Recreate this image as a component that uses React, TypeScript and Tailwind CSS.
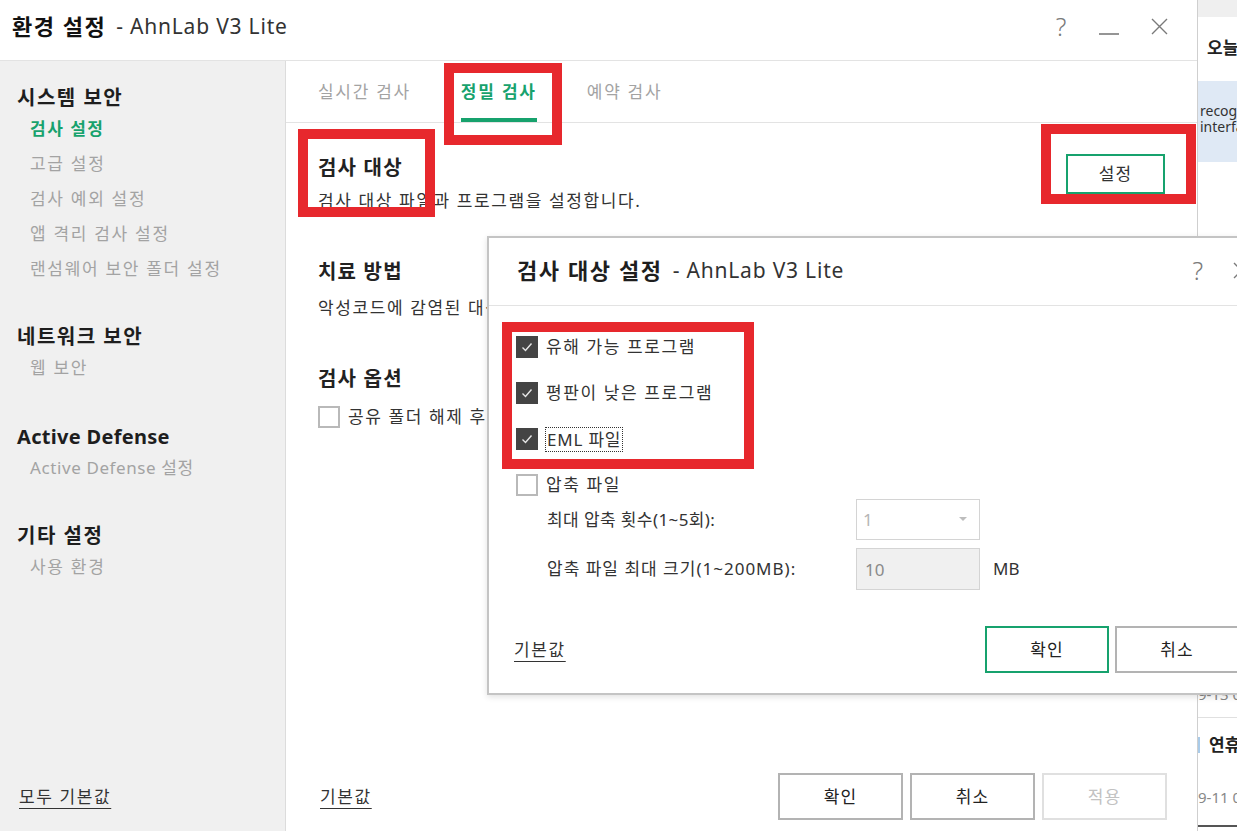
import React from 'react';

function CheckBox({ checked }: { checked?: boolean }) {
  if (checked) {
    return (
      <span className="flex h-[22px] w-[22px] shrink-0 items-center justify-center bg-[#444444]">
        <svg width="16" height="16" viewBox="0 0 16 16">
          <polyline points="3.5,8.5 6.5,11.5 12.5,4.5" fill="none" stroke="#e6e6e6" strokeWidth="1.4" />
        </svg>
      </span>
    );
  }
  return <span className="h-[22px] w-[22px] shrink-0 border-2 border-[#b9b9b9] bg-white" />;
}

function CloseIcon() {
  return (
    <svg width="17" height="17" viewBox="0 0 17 17">
      <path d="M1 1 L16 16 M16 1 L1 16" stroke="#7a7a7a" strokeWidth="1.4" />
    </svg>
  );
}

const subItem = 'pl-[13px] text-[17px] leading-[35px] tracking-[1.7px] text-[#a3a3a3]';
const groupHead = 'text-[20px] font-bold leading-[26px] tracking-[1.5px] text-[#1e1e1e]';
const bodyText = 'text-[17px] leading-[24px] tracking-[1.6px] text-[#333]';

function Sidebar() {
  return (
    <aside className="flex w-[286px] shrink-0 flex-col border-r border-[#dcdcdc] bg-[#f0f0f0] pl-[17px] pt-[24px]">
      <h3 className={groupHead}>시스템 보안</h3>
      <div className="pl-[13px] text-[17px] font-bold leading-[35px] tracking-[1.5px] text-[#17a26d]">검사 설정</div>
      <div className={subItem}>고급 설정</div>
      <div className={subItem}>검사 예외 설정</div>
      <div className={subItem}>앱 격리 검사 설정</div>
      <div className={subItem}>랜섬웨어 보안 폴더 설정</div>

      <h3 className={`mt-[38px] ${groupHead}`}>네트워크 보안</h3>
      <div className={subItem}>웹 보안</div>

      <h3 className="mt-[39px] text-[20px] font-bold leading-[26px] tracking-[0.3px] text-[#1e1e1e]">Active Defense</h3>
      <div className="pl-[13px] text-[17px] leading-[35px] tracking-[0.6px] text-[#a3a3a3]">Active Defense 설정</div>

      <h3 className={`mt-[38px] ${groupHead}`}>기타 설정</h3>
      <div className={subItem}>사용 환경</div>

      <div className="mt-auto pb-[22px] pl-[2px]">
        <span className={`${bodyText} underline underline-offset-[5px]`}>모두 기본값</span>
      </div>
    </aside>
  );
}

function Content() {
  const tabs = [
    { label: '실시간 검사', active: false },
    { label: '정밀 검사', active: true },
    { label: '예약 검사', active: false },
  ];
  return (
    <main className="flex min-w-0 flex-1 flex-col bg-white">
      <div className="flex h-[62px] gap-[50px] border-b border-[#e3e3e3] pl-[32px]">
        {tabs.map((t) =>
          t.active ? (
            <div key={t.label} className="flex h-full flex-col">
              <span className="pt-[19px] text-[17px] font-bold leading-[24px] tracking-[1.8px] text-[#17a26d]">{t.label}</span>
              <span className="flex-1" />
              <span className="h-[4px] bg-[#17a26d]" />
            </div>
          ) : (
            <div key={t.label} className="flex h-full flex-col">
              <span className="pt-[19px] text-[17px] leading-[24px] tracking-[1.7px] text-[#a3a3a3]">{t.label}</span>
            </div>
          )
        )}
      </div>

      <div className="pl-[32px] pr-[32px] pt-[32px]">
        <section className="flex items-start justify-between">
          <div>
            <h2 className="text-[20px] font-bold leading-[26px] tracking-[1.2px] text-[#222]">검사 대상</h2>
            <p className={`mt-[8px] ${bodyText}`}>검사 대상 파일과 프로그램을 설정합니다.</p>
          </div>
          <button className="-mt-px h-[40px] w-[99px] border-2 border-[#17a26d] text-[17px] tracking-[1px] text-[#333]">설정</button>
        </section>

        <section className="mt-[46px]">
          <h2 className="text-[20px] font-bold leading-[26px] tracking-[1.2px] text-[#222]">치료 방법</h2>
          <p className={`mt-[11px] whitespace-nowrap ${bodyText}`}>
            악성코드에 감염된 대상 파일을 치료하는 방법을 설정합니다.
          </p>
        </section>

        <section className="mt-[46px]">
          <h2 className="text-[20px] font-bold leading-[26px] tracking-[1.2px] text-[#222]">검사 옵션</h2>
          <div className="mt-[13px] flex h-[24px] items-center gap-[8px]">
            <CheckBox />
            <span className={`whitespace-nowrap ${bodyText}`}>공유 폴더 해제 후 검사</span>
          </div>
        </section>
      </div>

      <div className="mt-auto flex items-center pb-[11px] pl-[34px] pr-[30px]">
        <span className={`${bodyText} underline underline-offset-[5px]`}>기본값</span>
        <div className="ml-auto flex gap-[7px]">
          <button className="h-[47px] w-[125px] border-2 border-[#b3b3b3] text-[17px] tracking-[1px] text-[#222]">확인</button>
          <button className="h-[47px] w-[125px] border-2 border-[#b3b3b3] text-[17px] tracking-[1px] text-[#222]">취소</button>
          <button className="h-[47px] w-[125px] border-2 border-[#e0e0e0] text-[17px] tracking-[1px] text-[#c2c2c2]">적용</button>
        </div>
      </div>
    </main>
  );
}

function SideStrip() {
  return (
    <div className="flex min-w-0 flex-1 flex-col overflow-hidden whitespace-nowrap bg-white">
      <div className="h-[17px] bg-[#efefef]" />
      <div className="mt-[19px] pl-[9px] text-[17px] font-bold leading-[24px] text-[#222]">오늘</div>
      <div className="mt-[21px] h-[81px] bg-[#dfe9f5] pl-[2px] pt-[22px] text-[14px] leading-[16px] text-[#333]">
        <div>recognition</div>
        <div>interface</div>
      </div>
      <div className="flex-1" />
      <div className="h-[36px] border-b border-[#e0e0e0] text-[15px] leading-[24px] text-[#888]">9-13 08:00</div>
      <div className="flex h-[54px] items-center">
        <span className="border-l-2 border-[#a9cbe9] pl-[9px] text-[17px] font-bold leading-[16px] text-[#222]">연휴</span>
      </div>
      <div className="h-[55px] border-b-2 border-[#555] pt-[13px] text-[15px] leading-[24px] text-[#888]">9-11 08:00</div>
      <div className="h-[4px]" />
    </div>
  );
}

function Dialog() {
  return (
    <div className="absolute left-[487px] top-[236px] flex h-[459px] w-[790px] flex-col border-2 border-[#c4c4c4] bg-white shadow-[0_2px_6px_rgba(0,0,0,0.12)]">
      <div className="flex h-[68px] shrink-0 items-start border-b border-[#e3e3e3] pl-[28px] pt-[17px]">
        <span className="text-[22px] font-bold leading-[30px] tracking-[1.6px] text-[#1e1e1e]">검사 대상 설정</span>
        <span className="ml-[10px] text-[21px] leading-[30px] tracking-[0.8px] text-[#333]">- AhnLab V3 Lite</span>
        <div className="ml-auto flex items-center gap-[30px] pr-[25px] pt-[2px]">
          <span className="text-[25px] font-light leading-[26px] text-[#7a7a7a]">?</span>
          <CloseIcon />
        </div>
      </div>

      <div className="flex flex-col pl-[27px] pt-[30px]">
        <div className="flex flex-col gap-[24px]">
          <label className="flex h-[22px] items-center gap-[8px]">
            <CheckBox checked />
            <span className={bodyText}>유해 가능 프로그램</span>
          </label>
          <label className="flex h-[22px] items-center gap-[8px]">
            <CheckBox checked />
            <span className={bodyText}>평판이 낮은 프로그램</span>
          </label>
          <label className="flex h-[22px] items-center gap-[7px]">
            <CheckBox checked />
            <span className="border border-dotted border-[#333] px-[1px] text-[17px] leading-[23px] tracking-[0.8px] text-[#333]">EML 파일</span>
          </label>
          <label className="flex h-[22px] items-center gap-[8px]">
            <CheckBox />
            <span className={bodyText}>압축 파일</span>
          </label>
        </div>

        <div className="mt-[3px] flex items-center pl-[31px]">
          <span className="w-[309px] text-[17px] leading-[24px] tracking-[0.4px] text-[#333]">최대 압축 횟수(1~5회):</span>
          <div className="flex h-[41px] w-[124px] items-center border border-[#d4d4d4] pl-[6px] pr-[12px]">
            <span className="text-[17px] text-[#b5b5b5]">1</span>
            <svg className="ml-auto" width="8" height="5" viewBox="0 0 8 5">
              <path d="M0 0 L8 0 L4 4 Z" fill="#bdbdbd" />
            </svg>
          </div>
        </div>

        <div className="mt-[8px] flex items-center pl-[31px]">
          <span className="w-[309px] whitespace-nowrap text-[17px] leading-[24px] tracking-[1px] text-[#333]">압축 파일 최대 크기(1~200MB):</span>
          <div className="flex h-[42px] w-[124px] items-center border border-[#d4d4d4] bg-[#f0f0f0] pl-[8px] pt-[2px]">
            <span className="text-[17px] text-[#8a8a8a]">10</span>
          </div>
          <span className="ml-[13px] text-[17px] text-[#333]">MB</span>
        </div>
      </div>

      <div className="mt-auto flex items-center pb-[20px] pl-[25px] pr-[36px]">
        <span className={`${bodyText} underline underline-offset-[5px]`}>기본값</span>
        <div className="ml-auto flex gap-[6px]">
          <button className="h-[47px] w-[124px] border-2 border-[#17a26d] text-[17px] tracking-[1px] text-[#222]">확인</button>
          <button className="h-[47px] w-[124px] border-2 border-[#b3b3b3] text-[17px] tracking-[1px] text-[#222]">취소</button>
        </div>
      </div>
    </div>
  );
}

export default function App() {
  return (
    <div className="relative flex h-[831px] w-[1237px] overflow-hidden bg-white font-['Noto_Sans','Noto_Sans_CJK_KR',sans-serif] text-[#222]">
      <div className="flex h-full w-[1198px] shrink-0 flex-col border-r border-[#cfcfcf]">
        <header className="flex h-[61px] shrink-0 items-start border-b border-[#e3e3e3] pl-[12px] pt-[11px]">
          <span className="text-[22px] font-bold leading-[30px] tracking-[1.5px] text-[#111]">환경 설정</span>
          <span className="ml-[10px] text-[21px] leading-[30px] tracking-[0.8px] text-[#333]">- AhnLab V3 Lite</span>
          <div className="ml-auto flex items-center pr-[29px] pt-[2px]">
            <span className="w-[16px] text-center text-[25px] font-light leading-[26px] text-[#7a7a7a]">?</span>
            <svg className="ml-[30px] mt-[16px]" width="20" height="4" viewBox="0 0 20 4">
              <path d="M0 2 L20 2" stroke="#7a7a7a" strokeWidth="1.6" />
            </svg>
            <span className="ml-[32px]">
              <CloseIcon />
            </span>
          </div>
        </header>
        <div className="flex min-h-0 flex-1">
          <Sidebar />
          <Content />
        </div>
      </div>
      <SideStrip />

      <Dialog />

      {/* red annotation boxes */}
      <div className="absolute left-[444px] top-[63px] h-[82px] w-[118px] border-[10px] border-[#e7282d]" />
      <div className="absolute left-[298px] top-[129px] h-[88px] w-[137px] border-[10px] border-[#e7282d]" />
      <div className="absolute left-[1041px] top-[124px] h-[80px] w-[155px] border-[10px] border-[#e7282d]" />
      <div className="absolute left-[502px] top-[322px] h-[147px] w-[252px] border-[10px] border-[#e7282d]" />
    </div>
  );
}
